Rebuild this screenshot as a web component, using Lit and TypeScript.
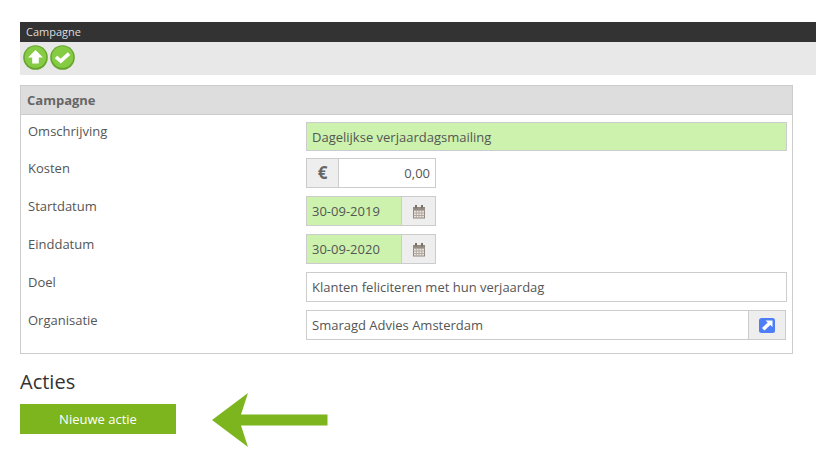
import { LitElement, html, css, svg } from "lit";
import { customElement } from "lit/decorators.js";

const cal = html`<svg width="14" height="15" viewBox="0 0 14 15"><rect x="1.500" y="3.500" width="11" height="10.500" fill="#eee8e2" stroke="#8f867c"/><path stroke="#b0a8a0" fill="none" d="M1.500 6.500h11M1.500 9h11M1.500 11.500h11M4.300 6v8M7 6v8M9.800 6v8"/><path fill="#968d84" d="M1.500 3.500h11V6h-11z"/><path fill="#7a7269" d="M3 1h2v3.500H3zM9 1h2v3.500H9z"/></svg>`;

@customElement("app-root")
export class AppRoot extends LitElement {
  static styles = css`
    :host { display: block; width: 816px; height: 458px; overflow: hidden; background: #fff; font-family: "Open Sans", sans-serif; color: #555; padding-top: 22px; box-sizing: border-box; }
    * { box-sizing: border-box; }
    .wrap { margin-left: 20px; }
    .title { height: 20px; background: #333; color: #ddd; font-size: 11px; line-height: 20px; padding-left: 6px; }
    .tools { height: 33px; background: #e8e8e8; display: flex; gap: 2px; padding: 3px 0 0 3px; }
    .tools svg { display: block; }
    .panel { width: 773px; height: 269px; margin-top: 10px; border: 1px solid #ccc; }
    .phead { height: 29px; background: #ddd; border-bottom: 1px solid #ccc; font-size: 13px; font-weight: 700; color: #666; line-height: 28px; padding-left: 6px; }
    .rows { padding: 7px 5px 0 7px; display: flex; flex-direction: column; gap: 8px; }
    .row { height: 30px; display: grid; grid-template-columns: 278px 1fr; font-size: 13px; }
    .row:first-child { height: 29px; margin-bottom: -1px; }
    .row:first-child .field { height: 29px; }
    .row + .row .label { margin-top: 1px; }
    .label { line-height: 18px; color: #555; }
    .field { height: 30px; border: 1px solid #ccc; font-size: 13px; line-height: 29px; padding-left: 5px; color: #555; background: #fff; }
    .green { background: #ccf2ae; }
    .group { display: flex; height: 30px; border: 1px solid #ccc; background: #fff; font-size: 13px; line-height: 28px; color: #555; }
    .small { width: 130px; }
    .addon { background: #eee; display: flex; align-items: center; justify-content: center; flex: none; }
    .euro { width: 32px; border-right: 1px solid #ccc; font-size: 17px; font-weight: 700; color: #666; }
    .amount { flex: 1; text-align: right; padding-right: 5px; }
    .date { flex: 1; background: #ccf2ae; padding-left: 5px; }
    .calbtn { width: 34px; border-left: 1px solid #ccc; }
    .orgtext { flex: 1; padding-left: 5px; }
    .orgbtn { width: 37px; border-left: 1px solid #ccc; }
    .org { width: 480px; }
    h2 { margin: 17px 0 0; font-size: 20px; font-weight: 400; line-height: 22px; color: #333; }
    .act { display: flex; align-items: center; gap: 36px; height: 54px; }
    .btn { width: 156px; height: 30px; background: #7cb51d; color: #fff; font-size: 13px; text-align: center; line-height: 30px; margin-top: -2px; }
    .act svg { display: block; }
  `;

  private circle(inner: unknown) {
    return html`<svg width="25" height="25" viewBox="0 0 25 25"><circle cx="12.500" cy="12.500" r="12.300" fill="#65a52c"/><circle cx="12.500" cy="12" r="10.800" fill="#86cb44"/>${inner}</svg>`;
  }

  render() {
    return html`<div class="wrap">
      <div class="title">Campagne</div>
      <div class="tools">
        ${this.circle(svg`<path fill="#fff" d="M12.500 5 20 12.500h-4.200V18.500H9.200v-6H5z"/>`)}
        ${this.circle(svg`<path fill="none" stroke="#fff" stroke-width="3.600" d="m6 12 4.800 4.200L19 8.700"/>`)}
      </div>
      <div class="panel">
        <div class="phead">Campagne</div>
        <div class="rows">
          <div class="row"><div class="label">Omschrijving</div><div class="field green">Dagelijkse verjaardagsmailing</div></div>
          <div class="row"><div class="label">Kosten</div><div class="group small"><div class="addon euro">€</div><div class="amount">0,00</div></div></div>
          <div class="row"><div class="label">Startdatum</div><div class="group small"><div class="date">30-09-2019</div><div class="addon calbtn">${cal}</div></div></div>
          <div class="row"><div class="label">Einddatum</div><div class="group small"><div class="date">30-09-2020</div><div class="addon calbtn">${cal}</div></div></div>
          <div class="row"><div class="label">Doel</div><div class="field">Klanten feliciteren met hun verjaardag</div></div>
          <div class="row"><div class="label">Organisatie</div><div class="group org"><div class="orgtext">Smaragd Advies Amsterdam</div><div class="addon orgbtn">
            <svg width="16" height="15" viewBox="0 0 16 15"><rect width="16" height="15" rx="2.500" fill="#4d7ef7"/><path fill="#fff" d="M6.500 2.500h7V9L11.200 6.900 5.500 12.500 3 10l5.700-5.400z"/></svg>
          </div></div></div>
        </div>
      </div>
      <h2>Acties</h2>
      <div class="act">
        <div class="btn">Nieuwe actie</div>
        <svg width="116" height="54" viewBox="0 0 116 54"><path fill="#7cb51d" d="M0 27 36 0 29 21.500H115.500V32.500H29L36 54z"/></svg>
      </div>
    </div>`;
  }
}
